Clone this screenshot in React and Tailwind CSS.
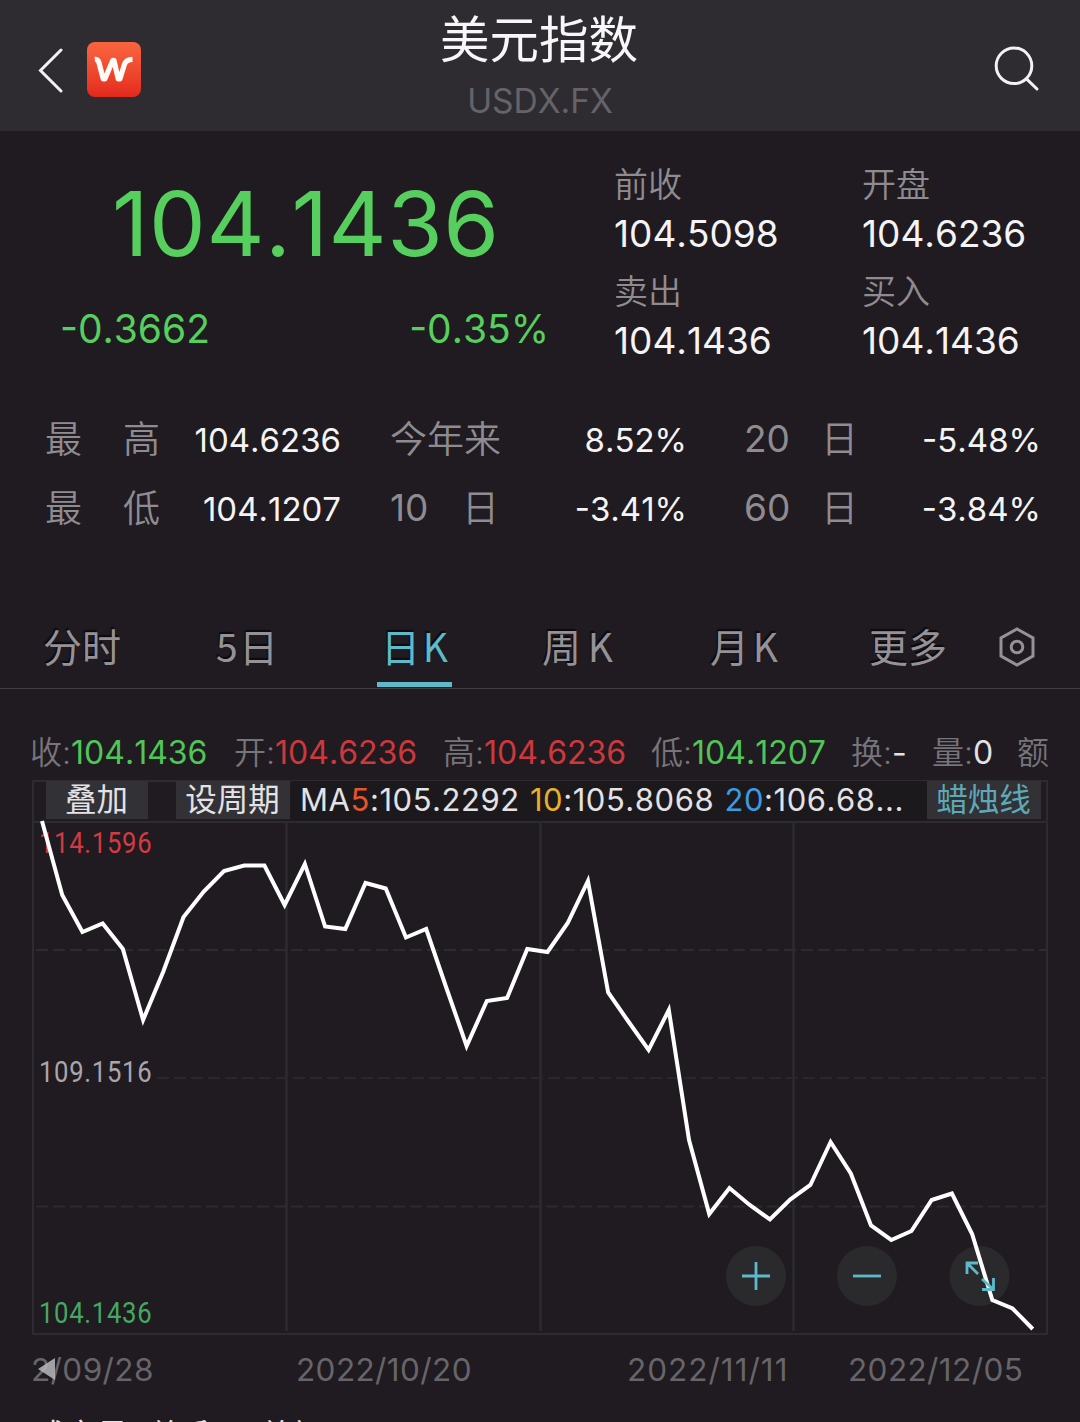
import clsx from "clsx";

const QUOTES = [
  { label: "前收", value: "104.5098" },
  { label: "开盘", value: "104.6236" },
  { label: "卖出", value: "104.1436" },
  { label: "买入", value: "104.1436" },
];

const STATS = [
  [
    { label: ["最", "高"], value: "104.6236" },
    { label: ["今年来"], value: "8.52%" },
    { label: ["20", "日"], value: "-5.48%" },
  ],
  [
    { label: ["最", "低"], value: "104.1207" },
    { label: ["10", "日"], value: "-3.41%" },
    { label: ["60", "日"], value: "-3.84%" },
  ],
];

const STAT_COLUMNS = [
  { cell: "w-[296px]", label: "w-[115px]" },
  { cell: "ml-[49px] w-[297px]", label: "w-[112px]" },
  { cell: "ml-[57px] w-[297px]", label: "w-[114px]" },
];

const TABS = [
  { label: "分时", className: "ml-[42px] w-[80px]" },
  { label: "5", suffix: "日", className: "ml-[93px] w-[64px]" },
  { label: "日", suffix: "K", className: "ml-[98px] w-[75px]", active: true },
  { label: "周", suffix: "K", className: "ml-[89px] w-[73px]" },
  { label: "月", suffix: "K", className: "ml-[95px] w-[70px]" },
  { label: "更多", className: "ml-[89px] w-[80px]" },
];

const OHLC = [
  { label: "收", value: "104.1436", color: "text-[#50c658]", width: "w-[204px]" },
  { label: "开", value: "104.6236", color: "text-[#cd383c]", width: "w-[209px]" },
  { label: "高", value: "104.6236", color: "text-[#cd383c]", width: "w-[208px]" },
  { label: "低", value: "104.1207", color: "text-[#50c658]", width: "w-[200px]" },
  { label: "换", value: "-", color: "text-[#e4e2e6]", width: "w-[81px]" },
  { label: "量", value: "0", color: "text-[#e4e2e6]", width: "w-[85px]" },
];

// y of each daily close inside the chart
const CLOSES = [
  821, 895, 932, 923.5, 949, 1020, 971.5, 917, 891.5, 871, 865.5, 865.5, 905,
  864, 926.5, 929, 883, 888.5, 937.5, 929, 988, 1046, 1001, 998, 949, 952, 923,
  881, 992.5, 1021.5, 1050, 1010, 1140, 1214, 1188, 1205, 1219.5, 1199.5, 1185,
  1142, 1173.5, 1225.5, 1240, 1231, 1200, 1193.5, 1234, 1300, 1308.5, 1329,
];

const linePoints = CLOSES.map((y, i) => `${42 + i * 20.22 - 32},${y - 780}`).join(" ");

const Header = () => (
  <header className="flex h-[131px] shrink-0 bg-[#2e2c30]">
    <div className="flex w-[400px] items-center pt-[8px]">
      <svg className="ml-[36px] h-[46px] w-[28px]" viewBox="0 0 28 46" fill="none">
        <path d="M25 3 L4.5 23.5 L25 44" stroke="#f2f1f3" strokeWidth="3" strokeLinecap="round" />
      </svg>
      <div className="ml-[23px] h-[55px] w-[54px] rounded-[8px] bg-linear-to-b from-[#fa6440] to-[#e3281c]">
        <svg className="h-full w-full" viewBox="0 0 54 55" fill="none">
          <path
            d="M7.8 17.3 Q10.8 17 11.8 20 L16.2 36.8 H18 L25.8 18.3 H27 L31.2 36.8 H33 L37.4 22.5 Q39 17.6 45.5 17.4"
            stroke="#fffaf5"
            strokeWidth="5.2"
            strokeLinejoin="round"
          />
        </svg>
      </div>
    </div>
    <div className="flex w-[280px] flex-col items-center">
      <h1 className="mt-[10px] -ml-[2px] h-[60px] text-[49.5px] leading-[60px] text-[#f7f6f8]">美元指数</h1>
      <p className="mt-[11px] text-[33.5px] leading-[40px] text-[#656368]">USDX.FX</p>
    </div>
    <div className="flex w-[400px] justify-end pt-[42px] pr-[38px]">
      <svg className="h-[50px] w-[50px]" viewBox="0 0 50 50" fill="none" stroke="#f2f1f3" strokeWidth="3">
        <circle cx="22" cy="23.8" r="17.8" />
        <path d="M35 37.3 L45 47" strokeLinecap="round" />
      </svg>
    </div>
  </header>
);

const Quote = () => (
  <section className="flex h-[269px] shrink-0">
    <div className="w-[615px] text-[#56cf5e]">
      <div className="mt-[43px] ml-[112px] text-[90px] leading-[100px] tracking-[0.5px]">104.1436</div>
      <div className="mt-[30px] ml-[60px] flex w-[489px] justify-between text-[39px] leading-[50px]">
        <span>-0.3662</span>
        <span>-0.35%</span>
      </div>
    </div>
    <div className="grid grid-cols-[248px_1fr] content-start pt-[28px]">
      {QUOTES.map(({ label, value }) => (
        <div key={label} className="-ml-[1px] h-[106.5px]">
          <div className="pt-[1px] text-[34px] leading-[50px] font-[350] text-[#8f8c91]">{label}</div>
          <div className="-mt-[1px] text-[37px] leading-[50px] text-[#f4f3f5]">{value}</div>
        </div>
      ))}
    </div>
  </section>
);

const Stats = () => (
  <section className="flex h-[200px] shrink-0 flex-col pt-[4px] pl-[45px]">
    {STATS.map((row, r) => (
      <div key={r} className="flex h-[69px]">
        {row.map(({ label, value }, c) => (
          <div key={value} className={clsx("flex justify-between", STAT_COLUMNS[c].cell)}>
            <div
              className={clsx(
                "flex justify-between pt-[1px] text-[37px] leading-[69px] whitespace-nowrap text-[#8f8c91]",
                label[1] === "日" && c === 1 ? "w-[109px]" : STAT_COLUMNS[c].label
              )}
            >
              {label.map((part) => (
                <span key={part} className={/\d/.test(part) ? "-mt-[1px]" : "font-[350]"}>
                  {part}
                </span>
              ))}
            </div>
            <div className="pt-[2px] text-[33px] leading-[69px] text-[#f4f3f5]">{value}</div>
          </div>
        ))}
      </div>
    ))}
  </section>
);

const Tabs = () => (
  <nav className="flex h-[89px] shrink-0 items-start border-b border-[#3f3d41]">
    {TABS.map(({ label, suffix, className, active }) => (
      <div
        key={label}
        className={clsx(
          "flex h-[87px] justify-between px-[1px] font-['Noto_Sans_CJK_SC',sans-serif] text-[39px] leading-[91px] whitespace-nowrap text-shadow-[-1px_-2px_1px_#0c0a0d]",
          className,
          active ? "border-b-[5px] border-[#5cbacb] px-[4px] text-[#5cbacb]" : "text-[#959297]"
        )}
      >
        <span>{label}</span>
        {suffix && <span>{suffix}</span>}
      </div>
    ))}
    <svg className="mt-[26px] ml-[50px] h-[42px] w-[38px]" viewBox="0 0 38 42" fill="none" stroke="#959297" strokeWidth="3">
      <path d="M19 3 L35 12 V30 L19 39 L3 30 V12 Z" />
      <circle cx="19" cy="21" r="5.8" />
    </svg>
  </nav>
);

const Chip = ({ className, children }) => (
  <div className={clsx("flex h-[38px] items-center justify-center bg-[#323135] pr-[1px] text-[31.5px] leading-[36px] whitespace-nowrap", className)}>
    {children}
  </div>
);

const Toolbar = () => (
  <div className="flex h-[40px] text-[#e4e2e6]">
    <Chip className="ml-[13px] w-[102px]">叠加</Chip>
    <Chip className="ml-[28px] w-[114px]">设周期</Chip>
    <div className="ml-[1px] w-[636px] bg-[#1b191c] pl-[9px] text-[31px] leading-[37px] tracking-[0.55px] whitespace-nowrap [word-spacing:1px]">
      MA<span className="text-[#e8552b]">5</span>:105.2292 <span className="text-[#e5b02c]">10</span>:105.8068{" "}
      <span className="text-[#3c9ae0]">20</span>:106.68...
    </div>
    <Chip className="w-[114px] text-[#5da9b8]">蜡烛线</Chip>
  </div>
);

const AxisLabel = ({ className, children }) => (
  <span className={clsx("absolute left-[7px] origin-left scale-x-[0.87] font-[Roboto,sans-serif] text-[29.5px] leading-[30px] tracking-[0.8px]", className)}>
    {children}
  </span>
);

const RoundButton = ({ className, path }) => (
  <button className={clsx("absolute top-[466px] h-[60px] w-[60px]", className)}>
    <svg viewBox="0 0 60 60" fill="none" stroke="#5cbacb" strokeWidth="2.8">
      <path d={path} />
    </svg>
  </button>
);

const Chart = () => (
  <div className="relative ml-[32px] h-[555px] w-[1016px] shrink-0">
    <AxisLabel className="top-[48px] text-[#d43a42]">114.1596</AxisLabel>
    <AxisLabel className="top-[277px] text-[#a9a6ab]">109.1516</AxisLabel>
    <AxisLabel className="top-[518px] text-[#45a862]">104.1436</AxisLabel>
    <svg className="absolute inset-0" width="1016" height="555" viewBox="0 0 1016 555" fill="none">
      <g fill="#2a292c">
        <circle cx="724" cy="496" r="30" />
        <circle cx="835" cy="496" r="30" />
        <circle cx="947.5" cy="496" r="30" />
      </g>
      <g stroke="#2d2b2f" strokeWidth="2">
        <path d="M1 1 H1015 V554 H1 Z" />
        <path d="M1 42 H1015" />
        <path d="M254.5 42 V551 M508.5 42 V551 M761.5 42 V551" strokeWidth="2.5" />
        <path d="M4 170 H1015 M4 426.5 H1015" strokeDasharray="12 5" />
        <path d="M125 298 H1015" stroke="#29272b" strokeDasharray="12 5" />
      </g>
      <polyline points={linePoints} stroke="#ffffff" strokeWidth="4" strokeMiterlimit="6" />
    </svg>
    <div className="relative pt-[1px] pl-[1px]">
      <Toolbar />
    </div>
    <RoundButton className="left-[694px]" path="M16 30 H44 M30 16 V44" />
    <RoundButton className="left-[805px]" path="M16 30 H44" />
    <RoundButton className="left-[917.5px]" path="M28 17 H17 V28 M17.5 17.5 L28 28 M32 43.5 H43.5 V32 M43 43 L32 33" />
  </div>
);

const Dates = () => (
  <div className="relative ml-[32px] flex h-[70px] shrink-0 text-[31.5px] leading-[70px] tracking-[0.4px] text-[#67656a]">
    <span className="w-[264px] -indent-[1px]">2/09/28</span>
    <span className="w-[331px]">2022/10/20</span>
    <span className="w-[221px] tracking-[1px]">2022/11/11</span>
    <span>2022/12/05</span>
    <svg className="absolute top-[22px] left-[5px] h-[24px] w-[19px]" viewBox="0 0 19 24">
      <path d="M1 12 L18 1 V23 Z" fill="#b9b7bb" fillOpacity="0.85" />
    </svg>
  </div>
);

export default function App() {
  return (
    <main className="flex h-[1422px] w-[1080px] flex-col overflow-hidden bg-[#1f1b20] font-[Inter,'Noto_Sans_CJK_SC',sans-serif] [font-kerning:none]">
      <Header />
      <Quote />
      <Stats />
      <Tabs />
      <div className="mt-[43px] ml-[30px] flex h-[48px] shrink-0 text-[32px] leading-[41px] whitespace-nowrap">
        {OHLC.map(({ label, value, color, width }) => (
          <div key={label} className={width}>
            <span className="font-[350] text-[#77747a]">{label}:</span>
            <span className={color}>{value}</span>
          </div>
        ))}
        <span className="font-[350] text-[#77747a]">额</span>
      </div>
      <Chart />
      <Dates />
      <div className="mt-[10px] ml-[35px] flex h-[40px] shrink-0 text-[31px] leading-[40px] whitespace-nowrap text-[#e4e2e6]">
        <span className="w-[114px]">成交量</span>
        <span className="w-[111px]">总手</span>
        <span>总额</span>
      </div>
    </main>
  );
}
